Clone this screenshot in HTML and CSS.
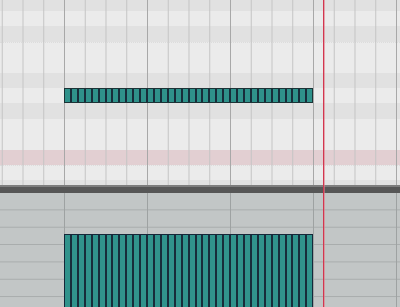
FILE: index.html
```html
<!DOCTYPE html>
<html>
<head>
<meta charset="utf-8">
<link rel="stylesheet" href="styles.css">
</head>
<body>
<div class="editor">
  <div class="roll">
    <div class="keys">
      <div class="row black"></div>
      <div class="row"></div>
      <div class="row black"></div>
      <div class="row octave"></div>
      <div class="row"></div>
      <div class="row black"></div>
      <div class="row"></div>
      <div class="row black"></div>
      <div class="row"></div>
      <div class="row"></div>
      <div class="row pink"></div>
      <div class="row octave-top"></div>
      <div class="row black"></div>
    </div>
    <div class="grid"></div>
    <div class="note">
      <span></span><span></span><span></span><span></span><span></span><span></span>
      <span></span><span></span><span></span><span></span><span></span><span></span>
      <span></span><span></span><span></span><span></span><span></span><span></span>
      <span></span><span></span><span></span><span></span><span></span><span></span>
      <span></span><span></span><span></span><span></span><span></span><span></span>
      <span></span><span></span><span></span><span></span><span></span><span></span>
    </div>
  </div>
  <div class="separator"></div>
  <div class="velocity">
    <div class="vgrid"></div>
    <div class="vbars">
      <span></span><span></span><span></span><span></span><span></span><span></span>
      <span></span><span></span><span></span><span></span><span></span><span></span>
      <span></span><span></span><span></span><span></span><span></span><span></span>
      <span></span><span></span><span></span><span></span><span></span><span></span>
      <span></span><span></span><span></span><span></span><span></span><span></span>
      <span></span><span></span><span></span><span></span><span></span><span></span>
    </div>
  </div>
  <div class="playhead"></div>
</div>
</body>
</html>
```

FILE: styles.css
```css
html, body {
  margin: 0;
  padding: 0;
  background: #ececec;
}
.editor {
  position: relative;
  width: 400px;
  height: 307px;
  overflow: hidden;
  display: flex;
  flex-direction: column;
}
.roll {
  position: relative;
  height: 185px;
  overflow: hidden;
  flex: none;
}
.keys {
  display: flex;
  flex-direction: column;
  margin-top: -4.4px;
}
.row {
  height: 15.4px;
  flex: none;
  background: #ebebeb;
  box-sizing: border-box;
}
.row.black {
  background: #e1e1e1;
}
.row.pink {
  background: #e2cfd2;
}
.row.octave,
.row.octave-top {
  border-top: 1px dotted #dcdcdc;
}
.grid {
  position: absolute;
  inset: 0;
  background-image:
    linear-gradient(to right, #a8a8a8 0 1px, transparent 1px),
    linear-gradient(to right, #c4c4c4 0 1px, transparent 1px);
  background-size: 83px 100%, 20.75px 100%;
  background-position: 64px 0, 1.75px 0;
  background-repeat: repeat-x;
}
.note {
  position: absolute;
  left: 64px;
  top: 88px;
  width: 249px;
  height: 15px;
  box-sizing: border-box;
  border: 1px solid #1b3336;
  display: flex;
  background: #2f918a;
}
.note span {
  flex: 1;
  border-left: 2px solid #182c3a;
}
.note span:first-child {
  border-left: none;
}
.separator {
  height: 8px;
  flex: none;
  box-sizing: border-box;
  background: #565656;
  border-top: 2px solid #7d7d7d;
}
.velocity {
  position: relative;
  flex: 1;
  background: #c2c6c6;
}
.vgrid {
  position: absolute;
  inset: 0;
  background-image:
    linear-gradient(to right, #9ea2a2 0 1px, transparent 1px),
    linear-gradient(to bottom, transparent 0 16.35px, #a8acac 16.35px 17.35px);
  background-size: 83px 100%, 100% 17.35px;
  background-position: 64px 0, 0 0;
  background-repeat: repeat-x, repeat-y;
}
.vbars {
  position: absolute;
  left: 64px;
  top: 41px;
  width: 249px;
  bottom: 0;
  box-sizing: border-box;
  border-top: 1px solid #15283a;
  border-left: 1px solid #15283a;
  border-right: 1px solid #15283a;
  display: flex;
  background: #31938c;
}
.vbars span {
  flex: 1;
  border-left: 2px solid #182c3a;
}
.vbars span:first-child {
  border-left: none;
}
.playhead {
  position: absolute;
  left: 323px;
  top: 0;
  width: 1px;
  height: 307px;
  background: #d2364f;
  box-shadow: 1px 0 0 rgba(225, 120, 135, 0.6);
}
```
